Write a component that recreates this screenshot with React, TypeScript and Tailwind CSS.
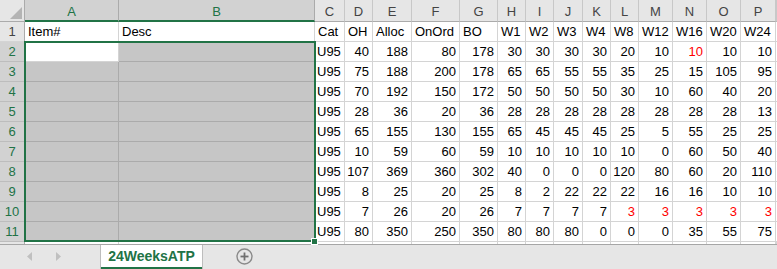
import React from "react";

const letters = ["A", "B", "C", "D", "E", "F", "G", "H", "I", "J", "K", "L", "M", "N", "O", "P", ""];

const GRID =
  "grid grid-cols-[25px_94px_196px_30px_28px_39px_48px_38px_28px_28px_29px_28px_28px_34px_34px_34px_35px_1fr]";

type V = string | number;
const data: V[][] = [
  ["U95", 40, 188, 80, 178, 30, 30, 30, 30, 20, 10, "10r", 10, 10],
  ["U95", 75, 188, 200, 178, 65, 65, 55, 55, 35, 25, 15, 105, 95],
  ["U95", 70, 192, 150, 172, 50, 50, 50, 50, 30, 10, 60, 40, 20],
  ["U95", 28, 36, 20, 36, 28, 28, 28, 28, 28, 28, 28, 28, 13],
  ["U95", 65, 155, 130, 155, 65, 45, 45, 45, 25, 5, 55, 25, 25],
  ["U95", 10, 59, 60, 59, 10, 10, 10, 10, 10, 0, 60, 50, 40],
  ["U95", 107, 369, 360, 302, 40, 0, 0, 0, 120, 80, 60, 20, 110],
  ["U95", 8, 25, 20, 25, 8, 2, 22, 22, 22, 16, 16, 10, 10],
  ["U95", 7, 26, 20, 26, 7, 7, 7, 7, "3r", "3r", "3r", "3r", "3r"],
  ["U95", 80, 350, 250, 350, 80, 80, 80, 0, 0, 0, 35, 55, 75],
];

const row1 = ["Item#", "Desc", "Cat", "OH", "Alloc", "OnOrd", "BO", "W1", "W2", "W3", "W4", "W8", "W12", "W16", "W20", "W24", ""];

function HeaderRow() {
  return (
    <div className={`${GRID} h-[22px]`}>
      <div className="flex items-end justify-end border-r border-b border-[#ababab] bg-[#e6e6e6] pr-[2px] pb-[2px]">
        <svg width="12" height="12" viewBox="0 0 12 12">
          <polygon points="12,0 12,12 0,12" fill="#b4b4b4" />
        </svg>
      </div>
      {letters.map((l, i) =>
        i < 2 ? (
          <div
            key={i}
            className="border-r border-r-[#ababab] border-b-2 border-b-[#217346] bg-[#d2d2d2] pt-[4px] text-center leading-[15px] text-[#217346]"
          >
            {l}
          </div>
        ) : (
          <div
            key={i}
            className="border-r border-r-[#c8c8c8] border-b border-b-[#ababab] bg-[#e6e6e6] pt-[4px] text-center leading-[15px] text-[#444444]"
          >
            {l}
          </div>
        )
      )}
    </div>
  );
}

function Row1() {
  return (
    <div className={`${GRID} h-[20px]`}>
      <div className="border-r border-r-[#ababab] border-b border-b-[#d4d4d4] bg-[#e6e6e6] pt-[2px] text-center leading-[15px] text-[#444444]">
        1
      </div>
      {row1.map((t, i) => (
        <div key={i} className="overflow-hidden whitespace-nowrap border-r border-b border-[#d4d4d4] pl-[3px] pt-[2px] leading-[15px]">
          {t}
        </div>
      ))}
    </div>
  );
}

function DataRow({ n, vals }: { n: number; vals: V[] }) {
  return (
    <div className={`${GRID} h-[20px]`}>
      <div className="border-r border-r-[#ababab] border-b border-b-[#bdbdbd] bg-[#d2d2d2] pt-[2px] text-center leading-[15px] text-[#217346]">
        {n}
      </div>
      <div
        className={
          n === 2
            ? "border-r border-b border-[#d4d4d4] bg-white"
            : "border-r border-b border-[#ababab] bg-[#c6c6c6]"
        }
      />
      <div className="border-r border-b border-[#ababab] bg-[#c6c6c6]" />
      {vals.map((v, i) => {
        const s = String(v);
        const red = s.endsWith("r");
        const txt = red ? s.slice(0, -1) : s;
        if (i === 0)
          return (
            <div key={i} className="border-r border-b border-[#d4d4d4] pl-[2px] pt-[2px] leading-[15px]">
              {txt}
            </div>
          );
        return (
          <div
            key={i}
            className={
              red
                ? "border-r border-b border-[#d4d4d4] pr-[3px] pt-[2px] text-right leading-[15px] text-[#ff0000]"
                : "border-r border-b border-[#d4d4d4] pr-[3px] pt-[2px] text-right leading-[15px]"
            }
          >
            {txt}
          </div>
        );
      })}
      <div className="border-b border-[#d4d4d4]" />
    </div>
  );
}

function PartialRow() {
  return (
    <div className={`${GRID} h-[3px] border-b border-[#a6a6a6]`}>
      <div className="border-r border-[#ababab] bg-[#e6e6e6]" />
      {letters.map((_, i) => (
        <div key={i} className="border-r border-[#d4d4d4]" />
      ))}
    </div>
  );
}

function TabBar() {
  return (
    <div className="flex h-[24px] bg-[#e6e6e6]">
      <div className="flex w-[100px] items-center pl-[27px] pb-[1px]">
        <svg width="5" height="9" viewBox="0 0 5 9">
          <polygon points="5,0 5,9 0,4.5" fill="#c0c0c0" />
        </svg>
        <svg width="5" height="9" viewBox="0 0 5 9" className="ml-[24px]">
          <polygon points="0,0 0,9 5,4.5" fill="#c0c0c0" />
        </svg>
      </div>
      <div className="flex w-[103px] flex-col border-x border-[#bdbdbd] bg-white">
        <div className="flex flex-1 items-center justify-center pt-[1px] text-[14px] font-bold text-[#217346]">
          24WeeksATP
        </div>
        <div className="h-[2px] bg-[#217346]" />
      </div>
      <div className="flex items-center pl-[33px] pb-[1px]">
        <svg width="17" height="17" viewBox="0 0 17 17">
          <circle cx="8.5" cy="8.5" r="7.5" fill="none" stroke="#8a8a8a" strokeWidth="1.4" />
          <line x1="8.5" y1="4.5" x2="8.5" y2="12.5" stroke="#6f6f6f" strokeWidth="1.8" />
          <line x1="4.5" y1="8.5" x2="12.5" y2="8.5" stroke="#6f6f6f" strokeWidth="1.8" />
        </svg>
      </div>
    </div>
  );
}

export default function App() {
  return (
    <div className="relative h-[269px] w-[777px] overflow-hidden bg-white font-['Liberation_Sans',Arial,sans-serif] text-[13px] text-black">
      <HeaderRow />
      <Row1 />
      {data.map((r, i) => (
        <DataRow key={i} n={i + 2} vals={r} />
      ))}
      <PartialRow />
      <TabBar />
      <div className="pointer-events-none absolute left-[24px] top-[41px] h-[201px] w-[292px] border-2 border-[#217346]" />
      <div className="pointer-events-none absolute left-[311px] top-[238px] h-[7px] w-[7px] border border-white bg-[#217346]" />
    </div>
  );
}
